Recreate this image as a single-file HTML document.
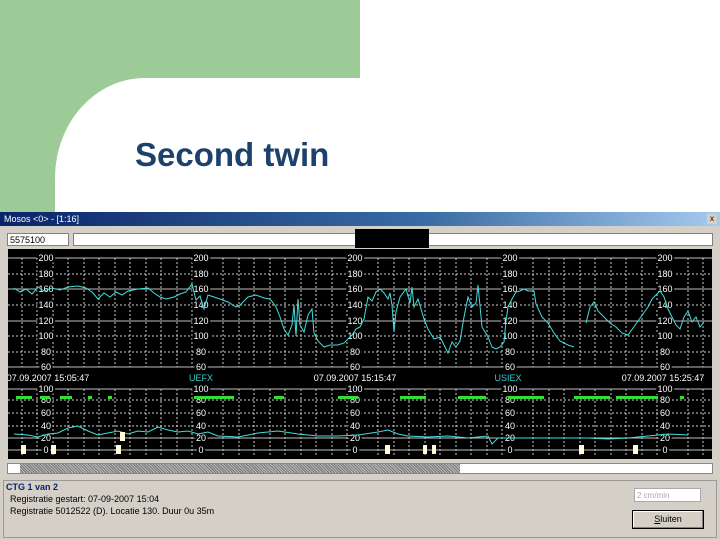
<!DOCTYPE html>
<html><head><style>
body{margin:0;width:720px;height:540px;overflow:hidden;background:#fff;position:relative;font-family:"Liberation Sans",sans-serif}
.g{position:absolute;left:0;top:0;width:360px;height:215px;background:#9dcb97}
.w{position:absolute;left:55px;top:78px;width:700px;height:200px;background:#fff;border-top-left-radius:90px 100px}
h1{position:absolute;left:135px;top:136px;margin:0;font-size:33px;font-weight:bold;color:#1b416c}
.win{position:absolute;left:0;top:212px;width:720px;height:328px;background:#d4d0c8}
.tb{position:absolute;left:0;top:0;width:720px;height:14px;background:linear-gradient(90deg,#0a246a,#3a6ea5 60%,#a6caf0);color:#fff;font-size:9px;line-height:14px;padding-left:4px;box-sizing:border-box}
.x{position:absolute;right:3px;top:2px;width:10px;height:10px;background:#d4d0c8;color:#000;font-size:8px;line-height:10px;text-align:center}
.in1{position:absolute;left:7px;top:21px;width:62px;height:13px;background:#fff;border:1px solid #808080;font-size:9px;line-height:13px;padding-left:2px;box-sizing:border-box}
.in2{position:absolute;left:73px;top:21px;width:640px;height:13px;background:#fff;border:1px solid #808080;box-sizing:border-box}
.blk{position:absolute;left:355px;top:17px;width:74px;height:19px;background:#000}
.sb{position:absolute;left:7px;top:251px;width:706px;height:11px;background:#fff;border:1px solid #888;box-sizing:border-box}
.sbf{position:absolute;left:12px;top:0;width:440px;height:9px;background:repeating-linear-gradient(45deg,#777 0 1px,#bbb 1px 2px)}
.bp{position:absolute;left:3px;top:268px;width:714px;height:58px;border:1px solid #999;box-sizing:border-box;font-size:9px}
.t{position:absolute;font-size:9px;color:#000}
.btn{position:absolute;left:632px;top:298px;width:70px;height:17px;border:1px solid #000;box-shadow:inset -1px -1px #808080,inset 1px 1px #fff;font-size:9px;text-align:center;line-height:17px}
.dd{position:absolute;left:634px;top:276px;width:67px;height:14px;background:#fff;border:1px solid #aaa;font-size:8px;color:#aaa;line-height:14px;padding-left:2px;box-sizing:border-box}
</style></head><body>
<div class="g"></div><div class="w"></div>
<h1>Second twin</h1>
<div class="win">
<div class="tb">Mosos &lt;0&gt; - [1:16]<span class="x">x</span></div>
<div class="in1">5575100</div><div class="in2"></div><div class="blk"></div>
<svg style="position:absolute;left:8px;top:37px" width="704" height="210" viewBox="0 0 704 210">
<rect width="704" height="210" fill="#000"/>
<g stroke="#fff" stroke-width="1" stroke-dasharray="2,2" opacity=".8">
<path d="M14 9V118M29 9V118M45 9V118M60 9V118M76 9V118M91 9V118M107 9V118M122 9V118M138 9V118M153 9V118M169 9V118M184 9V118M215 9V118M231 9V118M246 9V118M262 9V118M277 9V118M293 9V118M308 9V118M324 9V118M339 9V118M370 9V118M386 9V118M401 9V118M417 9V118M432 9V118M448 9V118M463 9V118M479 9V118M494 9V118M525 9V118M541 9V118M556 9V118M572 9V118M587 9V118M603 9V118M618 9V118M634 9V118M649 9V118M680 9V118M695 9V118"/>
<path d="M14 140V206M29 140V206M45 140V206M60 140V206M76 140V206M91 140V206M107 140V206M122 140V206M138 140V206M153 140V206M169 140V206M184 140V206M215 140V206M231 140V206M246 140V206M262 140V206M277 140V206M293 140V206M308 140V206M324 140V206M339 140V206M370 140V206M386 140V206M401 140V206M417 140V206M432 140V206M448 140V206M463 140V206M479 140V206M494 140V206M525 140V206M541 140V206M556 140V206M572 140V206M587 140V206M603 140V206M618 140V206M634 140V206M649 140V206M680 140V206M695 140V206"/>
<path d="M0 25H704M0 56H704M0 87H704M0 103H704M0 151H704M0 164H704M0 177H704"/>
</g>
<g stroke="#bbb" stroke-width="1">
<path d="M0 9H704M0 40H704M0 72H704M0 118H704M0 140H704M0 189H704M0 201H704"/>
</g>
<g fill="#fff" font-size="9" text-anchor="middle" font-family="Liberation Sans">
<g stroke="#000" stroke-width="4" paint-order="stroke">
<text x="38" y="12">200</text><text x="38" y="28">180</text><text x="38" y="43">160</text><text x="38" y="59">140</text><text x="38" y="75">120</text><text x="38" y="90">100</text><text x="38" y="106">80</text><text x="38" y="121">60</text>
<text x="193" y="12">200</text><text x="193" y="28">180</text><text x="193" y="43">160</text><text x="193" y="59">140</text><text x="193" y="75">120</text><text x="193" y="90">100</text><text x="193" y="106">80</text><text x="193" y="121">60</text>
<text x="347" y="12">200</text><text x="347" y="28">180</text><text x="347" y="43">160</text><text x="347" y="59">140</text><text x="347" y="75">120</text><text x="347" y="90">100</text><text x="347" y="106">80</text><text x="347" y="121">60</text>
<text x="502" y="12">200</text><text x="502" y="28">180</text><text x="502" y="43">160</text><text x="502" y="59">140</text><text x="502" y="75">120</text><text x="502" y="90">100</text><text x="502" y="106">80</text><text x="502" y="121">60</text>
<text x="657" y="12">200</text><text x="657" y="28">180</text><text x="657" y="43">160</text><text x="657" y="59">140</text><text x="657" y="75">120</text><text x="657" y="90">100</text><text x="657" y="106">80</text><text x="657" y="121">60</text>
<text x="38" y="143">100</text><text x="38" y="154">80</text><text x="38" y="167">60</text><text x="38" y="180">40</text><text x="38" y="192">20</text><text x="38" y="204">0</text>
<text x="193" y="143">100</text><text x="193" y="154">80</text><text x="193" y="167">60</text><text x="193" y="180">40</text><text x="193" y="192">20</text><text x="193" y="204">0</text>
<text x="347" y="143">100</text><text x="347" y="154">80</text><text x="347" y="167">60</text><text x="347" y="180">40</text><text x="347" y="192">20</text><text x="347" y="204">0</text>
<text x="502" y="143">100</text><text x="502" y="154">80</text><text x="502" y="167">60</text><text x="502" y="180">40</text><text x="502" y="192">20</text><text x="502" y="204">0</text>
<text x="657" y="143">100</text><text x="657" y="154">80</text><text x="657" y="167">60</text><text x="657" y="180">40</text><text x="657" y="192">20</text><text x="657" y="204">0</text>
</g>
<text x="40" y="132">07.09.2007 15:05:47</text>
<text x="347" y="132">07.09.2007 15:15:47</text>
<text x="655" y="132">07.09.2007 15:25:47</text>
<text x="193" y="132" fill="#3cc">UEFX</text>
<text x="500" y="132" fill="#3cc">USIEX</text>
</g>
<g transform="translate(0,-12)">
<polyline fill="none" stroke="#4dd" stroke-width="1" points="6,51 12,55 18,52 24,57 30,50 36,54 44,51 52,53 60,50 70,49 78,51 84,55 90,62 96,56 102,60 108,55 114,58 120,54 130,52 140,51 146,56 152,60 158,62 166,60 172,57 178,55 184,47 188,63 192,59 196,72 200,58 206,60 212,62 220,65 228,70 232,68 240,60 248,58 256,61 262,62 268,70 272,80 276,92 280,98 284,88 286,68 288,99 290,62 292,88 296,95 300,78 304,72 306,96 310,104 316,110 322,108 330,108 336,106 340,102 344,98 348,92 352,90 356,82 360,60 364,64 368,55 372,52 376,56 380,62 382,56 384,68 386,95 388,75 392,60 398,52 402,66 404,50 406,70 410,62 416,82 420,92 426,102 432,100 436,108 440,116 444,105 448,110 452,104 456,80 460,60 464,70 468,66 470,48 474,90 480,100 484,110 488,112 492,110 496,105 498,84 500,70 504,62 508,55 512,54 516,52 520,54 526,54 528,67 534,80 540,86 546,96 552,104 560,108 566,110"/>
<polyline fill="none" stroke="#4dd" stroke-width="1" points="578,86 582,70 586,65 590,74 596,80 602,86 608,90 614,96 620,98 640,70 644,62 648,58 652,54 656,60 660,72 664,80 668,88 672,92 676,80 680,74 684,85 688,80 692,90 696,85"/>
</g>
<polyline fill="none" stroke="#4dd" stroke-width="1" points="6,185 20,186 30,188 40,185 50,184 60,179 70,177 80,182 90,186 100,184 110,182 120,185 130,182 140,183 150,178 160,181 170,183 180,182 190,185 200,183 210,187 230,188 250,184 270,182 290,185 310,187 330,187 350,186 370,183 380,181 390,185 400,187 420,188 440,187 460,189 480,187 484,195 490,189 500,189 520,189 540,189 560,189 580,189 600,190 620,189 640,187 660,185 680,186"/>
<g fill="#3d3">
<rect x="8" y="147" width="16" height="3"/><rect x="32" y="147" width="10" height="3"/><rect x="52" y="147" width="12" height="3"/><rect x="80" y="147" width="4" height="3"/><rect x="100" y="147" width="4" height="3"/><rect x="186" y="147" width="40" height="3"/><rect x="266" y="147" width="10" height="3"/><rect x="330" y="147" width="20" height="3"/><rect x="392" y="147" width="26" height="3"/><rect x="450" y="147" width="28" height="3"/><rect x="500" y="147" width="36" height="3"/><rect x="566" y="147" width="36" height="3"/><rect x="608" y="147" width="42" height="3"/><rect x="672" y="147" width="4" height="3"/></g>
<g fill="#ffd">
<rect x="13" y="196" width="5" height="9"/><rect x="43" y="196" width="5" height="9"/><rect x="108" y="196" width="5" height="9"/><rect x="112" y="183" width="5" height="9"/><rect x="377" y="196" width="5" height="9"/><rect x="415" y="196" width="4" height="9"/><rect x="424" y="196" width="4" height="9"/><rect x="571" y="196" width="5" height="9"/><rect x="625" y="196" width="5" height="9"/></g>
</svg>
<div class="sb"><div class="sbf"></div></div>
<div class="bp">
<span class="t" style="left:2px;top:1px;color:#0a246a;font-weight:bold">CTG 1 van 2</span>
<span class="t" style="left:6px;top:13px">Registratie gestart: 07-09-2007 15:04</span>
<span class="t" style="left:6px;top:25px">Registratie 5012522 (D). Locatie 130. Duur 0u 35m</span>
</div>
<div class="dd">2 cm/min</div>
<div class="btn"><u>S</u>luiten</div>
</div>
</body></html>
